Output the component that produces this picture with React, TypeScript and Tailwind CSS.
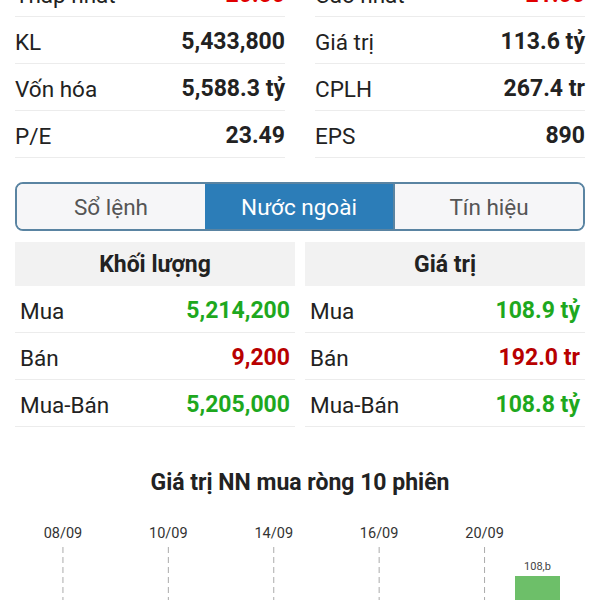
import React from "react";

const font = { fontFamily: "Roboto, 'Noto Sans', sans-serif" };

const stats: [string, string, string, string, string?, string?][] = [
  ["Thấp nhất", "20.50", "Cao nhất", "21.00", "text-[#e00000]", "text-[#e00000]"],
  ["KL", "5,433,800", "Giá trị", "113.6 tỷ"],
  ["Vốn hóa", "5,588.3 tỷ", "CPLH", "267.4 tr"],
  ["P/E", "23.49", "EPS", "890"],
];

function StatRow({ label, value, color }: { label: string; value: string; color?: string }) {
  return (
    <div className="flex h-[47px] items-center justify-between border-b border-[#ececec] pt-[5px]">
      <span className="text-[22.5px] text-[#222]">{label}</span>
      <span className={`text-[23px] font-bold ${color ?? "text-[#222]"}`}>{value}</span>
    </div>
  );
}

const GREEN = "text-[#1ea81e]";
const RED = "text-[#b80000]";

function FlowTable({ title, rows }: { title: string; rows: [string, string, string][] }) {
  return (
    <div className="flex flex-col">
      <div className="flex h-[44px] items-center justify-center bg-[#f2f2f2] pt-[3px] text-[23px] font-bold text-[#222]">
        {title}
      </div>
      {rows.map(([label, value, color]) => (
        <div key={label} className="flex h-[47px] items-center justify-between border-b border-[#ececec] px-[5px] pt-[5px]">
          <span className="text-[22.5px] text-[#222]">{label}</span>
          <span className={`text-[23px] font-bold ${color}`}>{value}</span>
        </div>
      ))}
    </div>
  );
}

function Chart() {
  const slot = 52.7;
  const x0 = 36.6;
  const labels = ["08/09", "10/09", "14/09", "16/09", "20/09"];
  return (
    <svg width="600" height="80" viewBox="0 0 600 80" className="block">
      {labels.map((d, i) => {
        const cx = x0 + slot * (i * 2) + slot / 2;
        return (
          <g key={d}>
            <text x={cx} y={18} textAnchor="middle" fontSize="14.5" fill="#333" fontFamily="Roboto, sans-serif">
              {d}
            </text>
            <line x1={cx} y1={27} x2={cx} y2={80} stroke="#aaa" strokeWidth="1" strokeDasharray="6 4" />
          </g>
        );
      })}
      <text x={537.5} y={50} textAnchor="middle" fontSize="11" fill="#444" fontFamily="Roboto, sans-serif">
        108,b
      </text>
      <rect x={515} y={56} width={45} height={30} fill="#6dbf69" />
    </svg>
  );
}

export default function App() {
  return (
    <div className="h-[600px] w-[600px] overflow-hidden bg-white" style={font}>
      <div className="-mt-[30px] grid grid-cols-2 gap-x-[30px] px-[15px]">
        <div className="flex flex-col">
          {stats.map((r) => (
            <StatRow key={r[0]} label={r[0]} value={r[1]} color={r[4]} />
          ))}
        </div>
        <div className="flex flex-col">
          {stats.map((r) => (
            <StatRow key={r[2]} label={r[2]} value={r[3]} color={r[5]} />
          ))}
        </div>
      </div>

      <div className="mx-[15px] mt-[24px] flex h-[49px] overflow-hidden rounded-[8px] border-2 border-[#5a84a2]">
        <div className="flex flex-1 items-center justify-center bg-[#f6f6f8] pt-[3px] text-[22.5px] text-[#555]">Sổ lệnh</div>
        <div className="flex flex-1 items-center justify-center bg-[#2c7db8] pt-[3px] text-[22.5px] text-white">Nước ngoài</div>
        <div className="flex flex-1 items-center justify-center border-l-2 border-[#5a84a2] bg-[#f6f6f8] pt-[3px] text-[22.5px] text-[#555]">
          Tín hiệu
        </div>
      </div>

      <div className="mt-[11px] grid grid-cols-2 gap-x-[10px] px-[15px]">
        <FlowTable
          title="Khối lượng"
          rows={[
            ["Mua", "5,214,200", GREEN],
            ["Bán", "9,200", RED],
            ["Mua-Bán", "5,205,000", GREEN],
          ]}
        />
        <FlowTable
          title="Giá trị"
          rows={[
            ["Mua", "108.9 tỷ", GREEN],
            ["Bán", "192.0 tr", RED],
            ["Mua-Bán", "108.8 tỷ", GREEN],
          ]}
        />
      </div>

      <div className="mt-[41px] text-center text-[23px] font-bold leading-[30px] text-[#222]">Giá trị NN mua ròng 10 phiên</div>
      <div className="mt-[22px]">
        <Chart />
      </div>
    </div>
  );
}
